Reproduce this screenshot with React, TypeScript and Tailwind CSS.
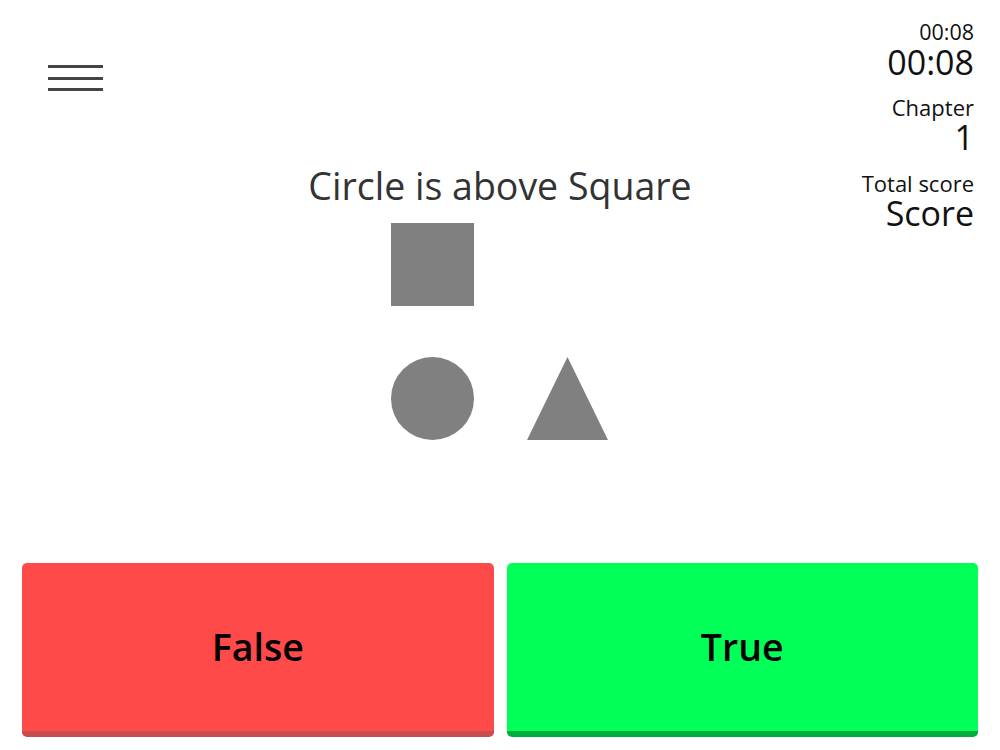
import React from "react";

export default function App() {
  return (
    <div
      className="w-[1000px] h-[750px] bg-white flex flex-col overflow-hidden"
      style={{ fontFamily: '"Open Sans", "Noto Sans", sans-serif' }}
    >
      <div className="flex-1 flex">
        <div className="w-[250px] pl-[48px] pt-[65px]">
          <div className="flex flex-col gap-[8.5px] w-[55px]">
            <div className="h-[3px] bg-[#444]" />
            <div className="h-[3px] bg-[#444]" />
            <div className="h-[3px] bg-[#444]" />
          </div>
        </div>
        <div className="flex-1 flex flex-col items-center pt-[162px]">
          <div className="text-[37.5px] leading-[48px] text-[#333] whitespace-nowrap">
            Circle is above Square
          </div>
          <div className="mt-[13px] grid grid-cols-[83px_83px] gap-x-[52px] gap-y-[51px]">
            <div className="w-[83px] h-[83px] bg-[#808080]" />
            <div />
            <div className="w-[83px] h-[83px] rounded-full bg-[#808080]" />
            <svg width="83" height="83" viewBox="0 0 83 83" className="block">
              <polygon points="41.5,0 82,83 1,83" fill="#808080" />
            </svg>
          </div>
        </div>
        <div className="w-[250px] pr-[26px] pt-[20px] flex flex-col items-end gap-[16px] text-[#111]">
          <div className="flex flex-col items-end">
            <div className="text-[21.5px] leading-[24px]">00:08</div>
            <div className="text-[34px] leading-[36px]">00:08</div>
          </div>
          <div className="flex flex-col items-end">
            <div className="text-[22px] leading-[22px]">Chapter</div>
            <div className="text-[34px] leading-[38px]">1</div>
          </div>
          <div className="flex flex-col items-end">
            <div className="text-[22px] leading-[22px]">Total score</div>
            <div className="text-[34px] leading-[38px]">Score</div>
          </div>
        </div>
      </div>
      <div className="flex gap-[13px] px-[22px] pb-[13px]">
        <button className="flex-1 h-[174px] rounded-[5px] bg-[#ff4a4a] border-b-[6px] border-[#c84d4d] flex items-center justify-center text-[37.5px] font-semibold text-black">
          False
        </button>
        <button className="flex-1 h-[174px] rounded-[5px] bg-[#00ff57] border-b-[6px] border-[#00ac3c] flex items-center justify-center text-[37.5px] font-semibold text-black">
          True
        </button>
      </div>
    </div>
  );
}
